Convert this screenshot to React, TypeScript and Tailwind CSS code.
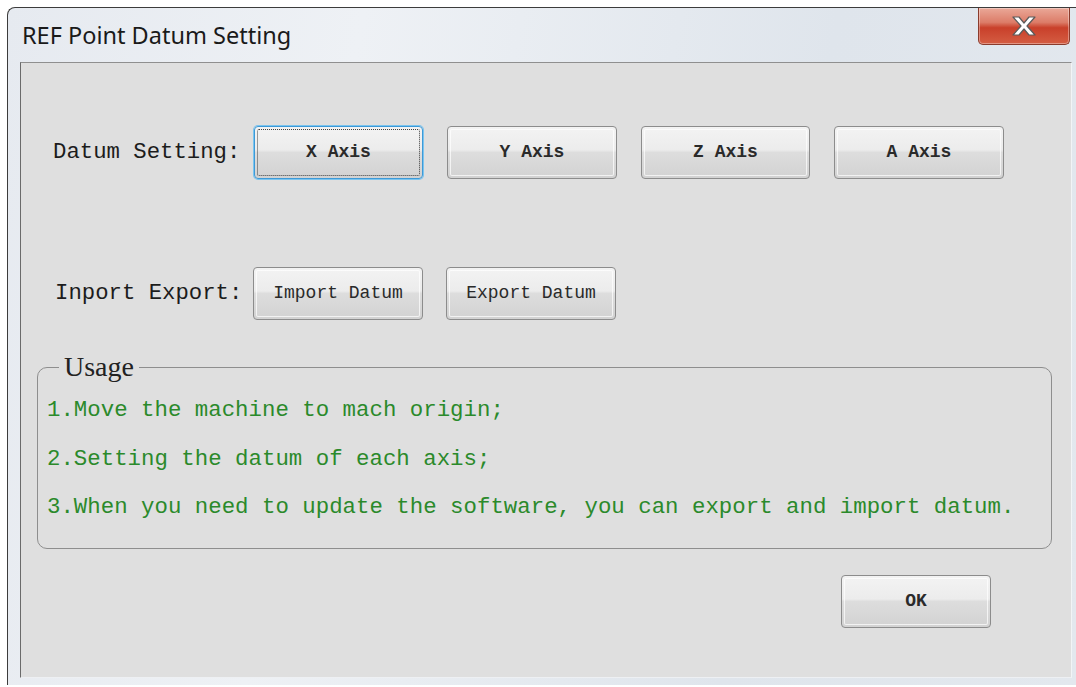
import React from "react";

const mono = "font-['Liberation_Mono',monospace]";

// Win7 style push button
const PushButton = ({ label, bold, focused, className = "" }: { label: string; bold?: boolean; focused?: boolean; className?: string }) => {
    return (
        <button
            className={`h-[53px] rounded-[4px] border ${focused ? "border-[#3d9ad8] shadow-[0_0_0_1px_#7cc4ee]" : "border-[#8c8c8c]"} bg-[linear-gradient(to_bottom,#f3f3f3_0%,#ececec_45%,#dddddd_50%,#d2d2d2_100%)] p-[2px] ${className}`}
        >
            <div className={`flex h-full w-full items-center justify-center rounded-[2px] ${focused ? "border border-dotted border-[#404040]" : "shadow-[inset_0_0_0_1px_rgba(255,255,255,0.7)]"}`}>
                <span className={`${mono} text-[18px] text-[#2a2a2a] ${bold ? "font-bold" : ""}`}>{label}</span>
            </div>
        </button>
    );
};

const CloseButton = () => (
    <div className="flex h-[37px] w-[92px] items-center justify-center rounded-b-[5px] border border-t-0 border-[#8a3b2c] bg-[linear-gradient(to_bottom,#eaa898_0%,#dc7c68_40%,#c9402a_55%,#d45d43_100%)] shadow-[inset_0_0_0_1px_rgba(255,255,255,0.35)]">
        <svg width="30" height="22" viewBox="0 0 30 22">
            <path
                d="M4 2 L10 2 L15 8 L20 2 L26 2 L18 11 L26 20 L20 20 L15 14 L10 20 L4 20 L12 11 Z"
                fill="#ffffff"
                stroke="#5a5a5a"
                strokeWidth="1.2"
                strokeLinejoin="round"
            />
        </svg>
    </div>
);

const usage = [
    "1.Move the machine to mach origin;",
    "2.Setting the datum of each axis;",
    "3.When you need to update the software, you can export and import datum.",
];

export default function App() {
    return (
        <div className="h-[687px] w-[1076px] overflow-hidden bg-white pl-[7px] pt-[7px]">
            <div className="flex h-[678px] w-[1069px] flex-col rounded-tl-[8px] border-l border-t border-[#3c3c3c] bg-[linear-gradient(100deg,#e6eaf0_0%,#eef1f5_30%,#dfe5ec_70%,#e3e8ee_100%)]">
                {/* Title bar */}
                <div className="flex h-[54px] shrink-0 items-start">
                    <span className="mt-[12px] pl-[14px] font-['Noto_Sans',sans-serif] text-[23.5px] leading-[30px] text-[#1a1a1a]">
                        REF Point Datum Setting
                    </span>
                    <div className="ml-auto mr-[6px]">
                        <CloseButton />
                    </div>
                </div>

                {/* Client area */}
                <div className="ml-[12px] flex h-[616px] w-[1052px] flex-col border-b border-l border-r border-t border-b-[#eef0f3] border-l-[#6a6a6a] border-r-[#f2f4f6] border-t-[#8f8f8f] bg-[#dfdfdf]">
                    <div className="mt-[63px] flex items-center pl-[32px]">
                        <span className={`${mono} w-[201px] text-[22.3px] text-[#1c1c1c]`}>Datum Setting:</span>
                        <div className="flex gap-[24px]">
                            <PushButton label="X Axis" bold focused className="w-[169px]" />
                            <PushButton label="Y Axis" bold className="w-[170px]" />
                            <PushButton label="Z Axis" bold className="w-[169px]" />
                            <PushButton label="A Axis" bold className="w-[170px]" />
                        </div>
                    </div>

                    <div className="mt-[88px] flex items-center pl-[34px]">
                        <span className={`${mono} w-[198px] text-[22.3px] text-[#1c1c1c]`}>Inport Export:</span>
                        <div className="flex gap-[23px]">
                            <PushButton label="Import Datum" className="w-[170px]" />
                            <PushButton label="Export Datum" className="w-[170px]" />
                        </div>
                    </div>

                    <fieldset className="ml-[16px] mt-[32px] w-[1015px] rounded-[10px] border border-[#8e8e8e] px-[9px] pb-[16px] pt-[4px]">
                        <legend className="ml-[12px] px-[5px] font-['Liberation_Serif',serif] text-[28px] leading-[30px] text-[#222]">Usage</legend>
                        {usage.map((line) => (
                            <div key={line} className={`${mono} h-[48.5px] text-[22.4px] leading-[48px] text-[#2b8a2b]`}>
                                {line}
                            </div>
                        ))}
                    </fieldset>

                    <div className="mr-[80px] mt-[26px] flex justify-end">
                        <PushButton label="OK" bold className="w-[150px]" />
                    </div>
                </div>
            </div>
        </div>
    );
}
